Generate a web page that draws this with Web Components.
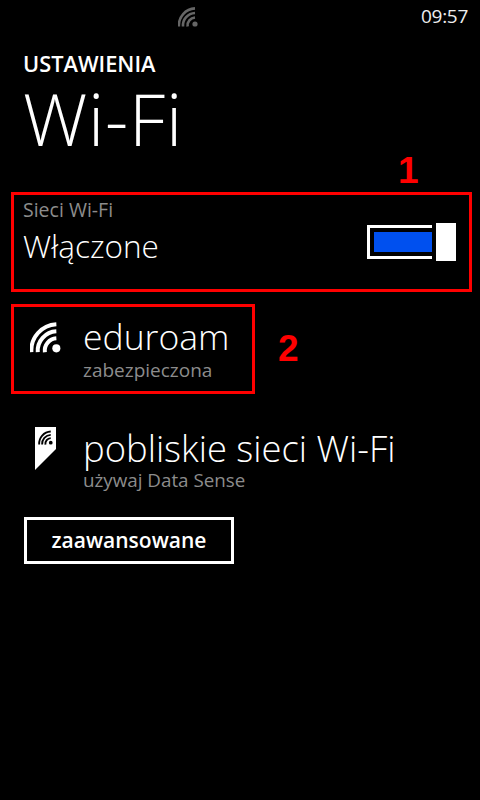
<!DOCTYPE html>
<html lang="pl">
<head>
<meta charset="utf-8">
<title>Wi-Fi</title>
<style>
  html, body { margin: 0; height: 100%; background: #000; }
  body { color: #fff; font-family: "Open Sans", "Noto Sans", sans-serif; overflow: hidden; }
</style>
</head>
<body>
<wp-status-bar time="09:57"></wp-status-bar>
<wp-page-title app="USTAWIENIA" page="Wi-Fi"></wp-page-title>
<wp-toggle-row label="Sieci Wi-Fi" value="Włączone" mark="1"></wp-toggle-row>
<wp-network-row name="eduroam" detail="zabezpieczona" mark="2"></wp-network-row>
<wp-sense-row name="pobliskie sieci Wi-Fi" detail="używaj Data Sense"></wp-sense-row>
<wp-button>zaawansowane</wp-button>

<script>
const wifiArcs = (color) => `
  <circle cx="17" cy="17" r="2.6" fill="${color}"/>
  <g fill="none" stroke="${color}" stroke-width="2.6">
    <path d="M9.6 19.5A8 8 0 0 1 17 10.5"/>
    <path d="M5 19.5A12.6 12.6 0 0 1 17 6"/>
    <path d="M.9 19.5A17 17 0 0 1 17 1.4"/>
  </g>`;

class WpStatusBar extends HTMLElement {
    connectedCallback() {
        this.attachShadow({ mode: 'open' });
        this.shadowRoot.innerHTML = `
            <style>
                :host {
                    display: flex;
                    justify-content: space-between;
                    height: 32px;
                    padding: 7px 12px 0 178px;
                    box-sizing: border-box;
                }
                svg { width: 20px; height: 20px; display: block; }
                span { font-size: 19px; line-height: 20px; letter-spacing: -.3px; margin-top: -1px; color: #eee; }
            </style>
            <svg viewBox="0 0 20 20">${wifiArcs('#666')}</svg>
            <span>${this.getAttribute('time')}</span>
        `;
    }
}

class WpPageTitle extends HTMLElement {
    connectedCallback() {
        this.attachShadow({ mode: 'open' });
        this.shadowRoot.innerHTML = `
            <style>
                :host { display: block; padding: 19px 0 0 23px; height: 143px; box-sizing: border-box; }
                .app { font-size: 21.8px; line-height: 26px; font-weight: 600; }
                .page { font-size: 72px; line-height: 72px; font-weight: 300; margin-top: 5px; letter-spacing: .8px; }
            </style>
            <div class="app">${this.getAttribute('app')}</div>
            <div class="page">${this.getAttribute('page')}</div>
        `;
    }
}

class WpToggleRow extends HTMLElement {
    connectedCallback() {
        this.attachShadow({ mode: 'open' });
        this.shadowRoot.innerHTML = `
            <style>
                :host {
                    display: flex;
                    align-items: flex-start;
                    justify-content: space-between;
                    position: relative;
                    width: 461px;
                    height: 100px;
                    margin: 17px 0 0 11px;
                    box-sizing: border-box;
                    border: 3px solid #f00;
                    padding: 4px 13px 0 9px;
                }
                .label { font-size: 19.5px; line-height: 22px; color: #8c8c8c; }
                .value { font-size: 31.5px; line-height: 36px; font-weight: 300; margin-top: 7px; }
                .switch { display: flex; align-items: center; margin-top: 24px; gap: 4px; }
                .track { width: 65px; height: 34px; box-sizing: border-box; border: 3px solid #fff; border-right: 0; padding: 4px 0 4px 4px; }
                .fill { height: 100%; background: #0050ef; }
                .thumb { width: 20px; height: 38px; background: #fff; }
                .mark { position: absolute; left: 384px; top: -44px; color: #f00; font: bold 37px/40px "Liberation Sans", sans-serif; }
            </style>
            <div>
                <div class="label">${this.getAttribute('label')}</div>
                <div class="value">${this.getAttribute('value')}</div>
            </div>
            <div class="switch"><div class="track"><div class="fill"></div></div><div class="thumb"></div></div>
            <div class="mark">${this.getAttribute('mark')}</div>
        `;
    }
}

class WpNetworkRow extends HTMLElement {
    connectedCallback() {
        this.attachShadow({ mode: 'open' });
        this.shadowRoot.innerHTML = `
            <style>
                :host {
                    display: flex;
                    position: relative;
                    width: 244px;
                    height: 90px;
                    margin: 12px 0 0 11px;
                    box-sizing: border-box;
                    border: 3px solid #f00;
                    padding: 0 0 0 16px;
                }
                svg { width: 31px; height: 31px; margin-top: 15px; flex: none; }
                .text { margin-left: 22px; }
                .name { font-size: 35.5px; line-height: 36px; font-weight: 300; margin-top: 11px; }
                .detail { font-size: 19px; line-height: 22px; color: #8c8c8c; margin-top: 5px; }
                .mark { position: absolute; left: 264px; top: 22px; color: #f00; font: bold 37px/40px "Liberation Sans", sans-serif; }
            </style>
            <svg viewBox="0 0 20 20">${wifiArcs('#fff')}</svg>
            <div class="text">
                <div class="name">${this.getAttribute('name')}</div>
                <div class="detail">${this.getAttribute('detail')}</div>
            </div>
            <div class="mark">${this.getAttribute('mark')}</div>
        `;
    }
}

class WpSenseRow extends HTMLElement {
    connectedCallback() {
        this.attachShadow({ mode: 'open' });
        this.shadowRoot.innerHTML = `
            <style>
                :host { display: flex; margin: 33px 0 0 35px; }
                svg { width: 21px; height: 43px; flex: none; }
                .text { margin: 3px 0 0 27px; }
                .name { font-size: 36.4px; line-height: 36px; font-weight: 300; }
                .detail { font-size: 18.8px; line-height: 22px; color: #8c8c8c; margin-top: 3px; }
            </style>
            <svg viewBox="0 0 21 43">
                <path d="M0 0H21V22L0 43Z" fill="#fff"/>
                <g transform="translate(3.5 3.5) scale(.72)">${wifiArcs('#000')}</g>
            </svg>
            <div class="text">
                <div class="name">${this.getAttribute('name')}</div>
                <div class="detail">${this.getAttribute('detail')}</div>
            </div>
        `;
    }
}

class WpButton extends HTMLElement {
    connectedCallback() {
        this.attachShadow({ mode: 'open' });
        this.shadowRoot.innerHTML = `
            <style>
                :host {
                    display: flex;
                    align-items: center;
                    justify-content: center;
                    width: 210px;
                    height: 47px;
                    margin: 26px 0 0 24px;
                    padding-bottom: 1px;
                    box-sizing: border-box;
                    border: 3px solid #fff;
                    font-size: 21px;
                    font-weight: 600;
                }
            </style>
            <slot></slot>
        `;
    }
}

customElements.define('wp-status-bar', WpStatusBar);
customElements.define('wp-page-title', WpPageTitle);
customElements.define('wp-toggle-row', WpToggleRow);
customElements.define('wp-network-row', WpNetworkRow);
customElements.define('wp-sense-row', WpSenseRow);
customElements.define('wp-button', WpButton);
</script>
</body>
</html>
